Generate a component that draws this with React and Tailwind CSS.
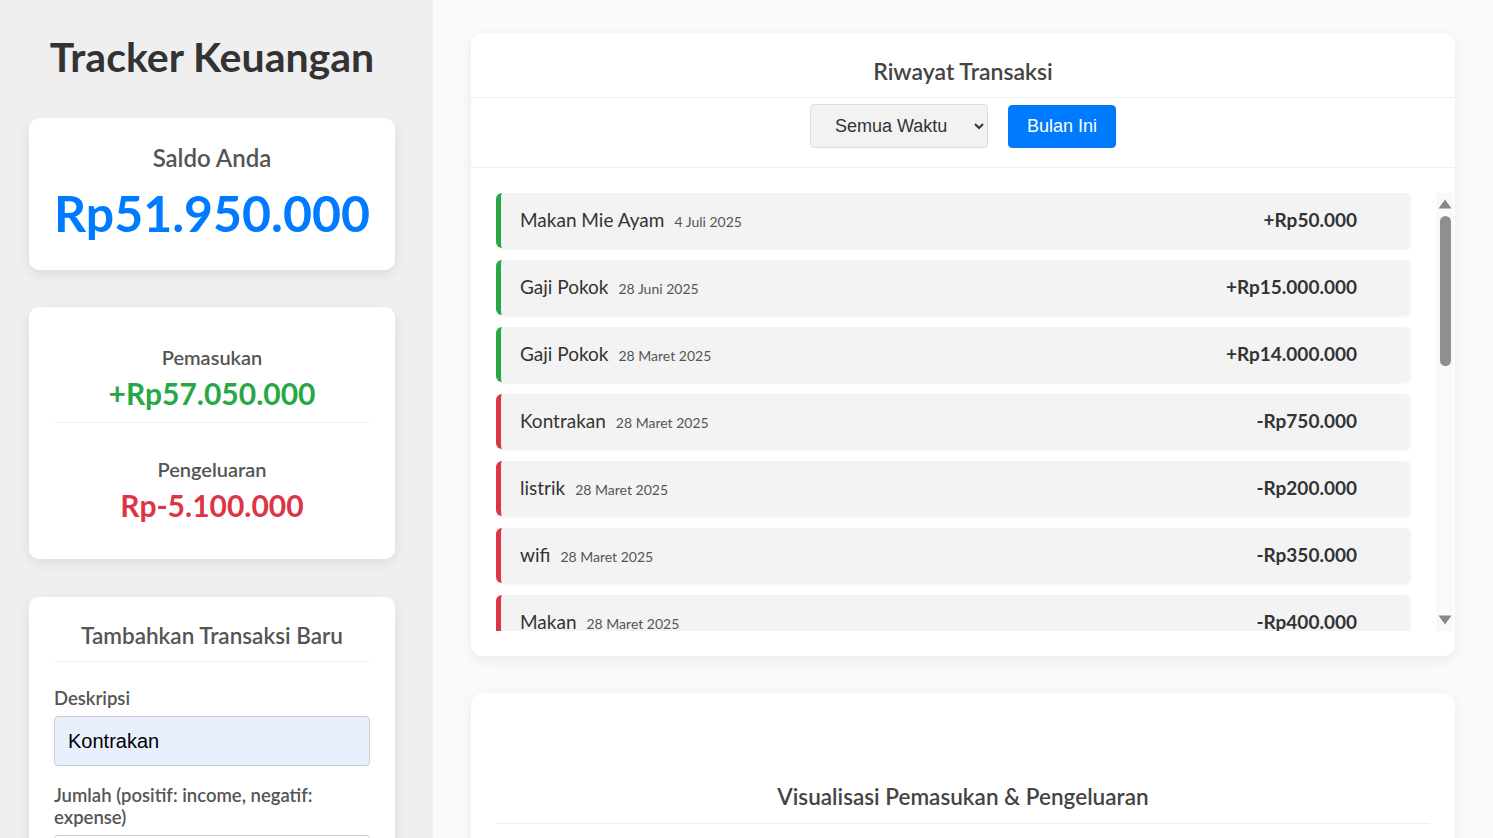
import React, { useState } from 'react';

const transactions = [
  { id: 1, text: 'Makan Mie Ayam', date: '4 Juli 2025', amount: 50000 },
  { id: 2, text: 'Gaji Pokok', date: '28 Juni 2025', amount: 15000000 },
  { id: 3, text: 'Gaji Pokok', date: '28 Maret 2025', amount: 14000000 },
  { id: 4, text: 'Kontrakan', date: '28 Maret 2025', amount: -750000 },
  { id: 5, text: 'listrik', date: '28 Maret 2025', amount: -200000 },
  { id: 6, text: 'wifi', date: '28 Maret 2025', amount: -350000 },
  { id: 7, text: 'Makan', date: '28 Maret 2025', amount: -400000 },
  { id: 8, text: 'Bensin', date: '27 Maret 2025', amount: -150000 },
  { id: 9, text: 'Gaji Pokok', date: '28 Februari 2025', amount: 14000000 },
  { id: 10, text: 'Kontrakan', date: '28 Februari 2025', amount: -750000 },
  { id: 11, text: 'listrik', date: '28 Februari 2025', amount: -200000 },
  { id: 12, text: 'wifi', date: '28 Februari 2025', amount: -350000 },
];

const formatRp = (n) => {
  const s = Math.abs(n).toLocaleString('id-ID');
  return (n < 0 ? '-' : '+') + 'Rp' + s;
};

const TransactionItem = ({ t }) => {
  const income = t.amount > 0;
  return (
    <li
      className={`shrink-0 flex items-center justify-between h-[55px] pl-[19px] pr-[54px] bg-[#f3f3f3] rounded-[6px] border-l-[5px] shadow-[0_1px_3px_rgba(0,0,0,0.08)] ${
        income ? 'border-[#28a745]' : 'border-[#dc3545]'
      }`}
    >
      <div className="flex items-baseline">
        <span className="text-[19px] text-[#333]">{t.text}</span>
        <span className="ml-[10px] text-[14px] text-[#555]">{t.date}</span>
      </div>
      <span className="text-[19px] font-bold text-[#333]">{formatRp(t.amount)}</span>
    </li>
  );
};

// scrollbar drawn by hand, the headless browser hides the native one
const FakeScrollbar = () => (
  <div className="w-[18px] shrink-0 bg-[#f9f9f9] flex flex-col items-center pt-[6px] pb-[6px]">
    <svg width="14" height="10" viewBox="0 0 14 10" className="shrink-0">
      <path d="M7 0.5 L13.5 9.5 L0.5 9.5 Z" fill="#888" />
    </svg>
    <div className="mt-[7px] w-[11px] h-[150px] rounded-full bg-[#8f8f8f]" />
    <div className="flex-1" />
    <svg width="14" height="10" viewBox="0 0 14 10" className="shrink-0">
      <path d="M0.5 0.5 L13.5 0.5 L7 9.5 Z" fill="#888" />
    </svg>
  </div>
);

const card = 'bg-white rounded-[10px] shadow-[0_4px_12px_rgba(0,0,0,0.08)]';

const App = () => {
  const [desc, setDesc] = useState('Kontrakan');
  const [amount, setAmount] = useState('');
  const [filter, setFilter] = useState('all');

  return (
    <div className="flex h-screen overflow-hidden font-['Lato','Noto_Sans',sans-serif] bg-[#fafafa]">
      {/* Sidebar */}
      <aside className="w-[433px] shrink-0 bg-[#efefef] px-[29px] overflow-hidden">
        <h1 className="w-[366px] text-center text-[41px] font-bold text-[#333] pt-[33px] leading-[48px]">
          Tracker Keuangan
        </h1>

        <div className={`mt-[37px] w-[366px] ${card} pt-[24px] pb-[26px] text-center`}>
          <h2 className="text-[24px] font-semibold text-[#555] leading-[32px]">Saldo Anda</h2>
          <p className="mt-[8px] text-[50px] font-bold text-[#007bff] leading-[62px]">Rp51.950.000</p>
        </div>

        <div className={`mt-[37px] w-[366px] ${card} px-[25px] pt-[37px] pb-[34px] text-center`}>
          <div className="pb-[9px] border-b border-[#eee]">
            <h3 className="text-[20px] font-semibold text-[#555] leading-[26px]">Pemasukan</h3>
            <p className="mt-[3px] text-[30px] font-bold text-[#28a745] leading-[40px]">+Rp57.050.000</p>
          </div>
          <div className="pt-[33px]">
            <h3 className="text-[20px] font-semibold text-[#555] leading-[26px]">Pengeluaran</h3>
            <p className="mt-[3px] text-[30px] font-bold text-[#dc3545] leading-[40px]">Rp-5.100.000</p>
          </div>
        </div>

        <div className={`mt-[38px] w-[366px] ${card} px-[25px] pt-[24px] pb-[25px]`}>
          <h3 className="text-center text-[22.5px] font-semibold text-[#555] leading-[30px] pb-[10px] border-b border-[#eee]">
            Tambahkan Transaksi Baru
          </h3>
          <form className="pt-[24px]" onSubmit={(e) => e.preventDefault()}>
            <label className="block text-[18.5px] font-semibold text-[#555] leading-[24px] mb-[6px]">Deskripsi</label>
            <input
              value={desc}
              onChange={(e) => setDesc(e.target.value)}
              className="w-full h-[50px] px-[13px] rounded-[4px] border border-[#ccc] bg-[#e8f0fe] text-[20px] text-black font-['Liberation_Sans',Arial,sans-serif] outline-none"
            />
            <label className="block mt-[18px] text-[18.5px] font-semibold text-[#555] leading-[22px] mb-[7px]">
              Jumlah (positif: income, negatif: expense)
            </label>
            <input
              value={amount}
              onChange={(e) => setAmount(e.target.value)}
              className="w-full h-[50px] px-[13px] rounded-[4px] border border-[#ccc] bg-white text-[20px] font-['Liberation_Sans',Arial,sans-serif] outline-none"
            />
          </form>
        </div>
      </aside>

      {/* Main */}
      <main className="flex-1 overflow-hidden px-[38px] pt-[33px]">
        <section className="bg-white rounded-[12px] shadow-[0_4px_14px_rgba(0,0,0,0.07)] pb-[25px]">
          <h2 className="text-center text-[23px] font-semibold text-[#444] leading-[28px] pt-[24px] pb-[12px] border-b border-[#eee]">
            Riwayat Transaksi
          </h2>
          <div className="flex justify-center items-center gap-[20px] pt-[6px] pb-[19px] border-b border-[#eee]">
            <select
              value={filter}
              onChange={(e) => setFilter(e.target.value)}
              className="w-[178px] h-[44px] pl-[20px] pr-[8px] rounded-[4px] border border-[#ddd] bg-[#f2f2f2] text-[18px] text-[#333] font-['Liberation_Sans',Arial,sans-serif]"
            >
              <option value="all">Semua Waktu</option>
              <option value="month">Bulan Ini</option>
            </select>
            <button className="w-[108px] h-[43px] rounded-[4px] border border-[#0a76e8] bg-[#007bff] text-white text-[18px] font-['Liberation_Sans',Arial,sans-serif]">
              Bulan Ini
            </button>
          </div>
          <div className="mt-[25px] ml-[25px] mr-[1px] h-[438px] flex">
            <ul className="flex-1 mr-[25px] overflow-hidden flex flex-col gap-[12px]">
              {transactions.map((t) => (
                <TransactionItem key={t.id} t={t} />
              ))}
            </ul>
            <FakeScrollbar />
          </div>
        </section>

        <section className="mt-[37px] bg-white rounded-[12px] shadow-[0_4px_14px_rgba(0,0,0,0.07)] px-[25px] pt-[89px] pb-[40px]">
          <h2 className="text-center text-[22.5px] font-semibold text-[#444] leading-[30px] pb-[11px] border-b border-[#eee]">
            Visualisasi Pemasukan &amp; Pengeluaran
          </h2>
          <div className="h-[300px]" />
        </section>
      </main>
    </div>
  );
};

export default App;
